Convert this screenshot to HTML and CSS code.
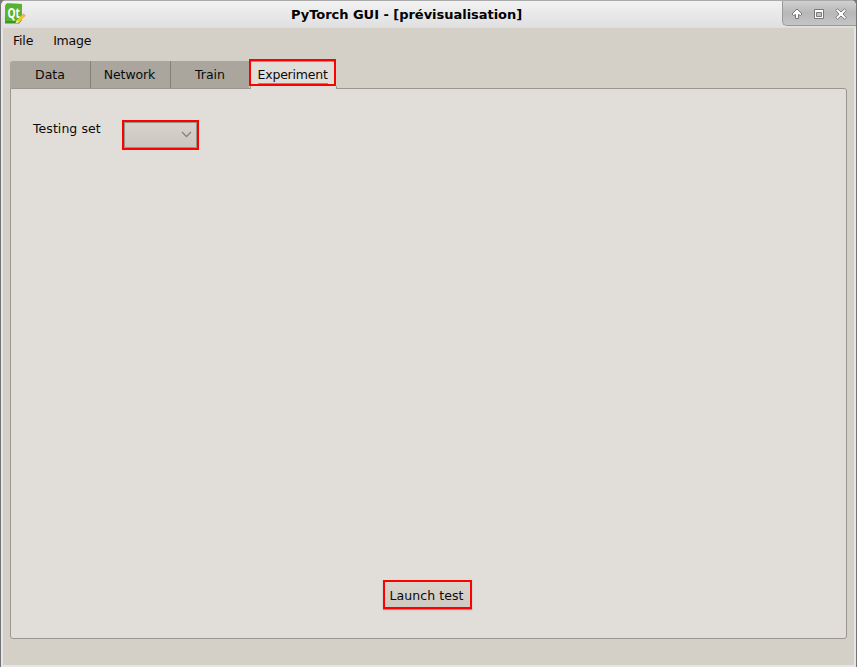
FILE: index.html
```html
<!DOCTYPE html>
<html lang="fr">
<head>
<meta charset="utf-8">
<title>PyTorch GUI</title>
<link rel="stylesheet" href="styles.css">
</head>
<body>
<div class="window">
  <header class="titlebar">
    <svg class="logo" width="22" height="22" viewBox="0 0 22 22">
      <path d="M3 .5 18 1v16L15 20.500H1L1.500 2z" fill="#3a9922"/>
      <path d="M1 3 3 .5 18 1 18 15 16 18 2 18z" fill="#57b32f"/>
      <text x="3.500" y="14.500" class="logo-text" textLength="12.500" lengthAdjust="spacingAndGlyphs">Qt</text>
      <path d="M11.500 20.500 13 17 18.500 11.500 20.800 13.500 15.500 19z" fill="#f4c51d"/>
      <path d="M11.500 20.500 13 17 15.500 19z" fill="#f6e4ba"/>
      <path d="M18 12 19.500 10.500 21.700 12.500 20.300 14z" fill="#e9a09a"/>
    </svg>
    <h1 class="title">PyTorch GUI - [prévisualisation]</h1>
    <div class="controls">
      <svg width="12" height="12" viewBox="0 0 12 12"><path d="M6 1 11 6 9.500 7.500 7.500 6.500V10.500H4.500V6.500L2.500 7.500 1 6z" class="glyph"/></svg>
      <svg width="12" height="12" viewBox="0 0 12 12"><path d="M1.500 1.500h9v9h-9z" class="glyph"/><path d="M3.500 4.500h5v4h-5z" fill="#c2c2c2" stroke="#777"/></svg>
      <svg width="12" height="12" viewBox="0 0 12 12"><path d="M2.500.8 6 4 9.500.8 11.200 2.500 8 6 11.200 9.500 9.500 11.200 6 8 2.500 11.200.8 9.500 4 6 .8 2.500z" class="glyph"/></svg>
    </div>
  </header>
  <main class="client">
    <nav class="menu"><span>File</span><span>Image</span></nav>
    <div class="tabs">
      <div class="tab">Data</div>
      <div class="tab">Network</div>
      <div class="tab">Train</div>
      <div class="tab active"><span>Experiment</span></div>
    </div>
    <section class="panel">
      <div class="field">
        <label>Testing set</label>
        <div class="combo"><svg width="11" height="7" viewBox="0 0 11 7"><path d="M1 1 5.500 5.500 10 1" fill="none" stroke="#85827c" stroke-width="1.300"/></svg></div>
      </div>
      <button class="launch">Launch test</button>
    </section>
  </main>
</div>
</body>
</html>
```
FILE: styles.css
```css
* { box-sizing: border-box; }
body {
  margin: 0;
  background: #777;
  font: 12.5px/16px "DejaVu Sans", sans-serif;
  color: #0a0a0a;
}
.window {
  display: flex;
  flex-direction: column;
  width: 857px;
  height: 667px;
  border: solid #747474;
  border-width: 0 1px;
  border-radius: 6px 6px 0 0;
  background: #e6e6e6;
  overflow: hidden;
}
.titlebar {
  display: flex;
  height: 28px;
  flex: none;
  padding-left: 3px;
  border-top: 1px solid #aaa;
  background: linear-gradient(#f2f2f2, #dfdfdf);
}
.logo { margin-top: 2px; }
.logo-text { font: bold 14px "Open Sans", sans-serif; fill: #fff; }
.title {
  flex: 1;
  margin: 0;
  padding: 6px 0 0 265px;
  font-size: 13px;
  line-height: 16px;
  letter-spacing: -0.03px;
  color: #000;
  white-space: nowrap;
}
.controls {
  display: flex;
  gap: 10px;
  width: 74px;
  height: 25px;
  padding: 7px 0 0 8px;
  border: solid #999;
  border-width: 0 0 1px 1px;
  border-radius: 0 0 0 5px;
  background: linear-gradient(#d0d0d0, #b8b8b8 50%, #c5c5c5);
}
.glyph { fill: #fff; stroke: #777; stroke-width: 1; }
.client {
  display: flex;
  flex-direction: column;
  flex: 1;
  margin: 0 2px 2px;
  padding: 0 7px 26px;
  background: #d4cfc7;
}
.menu {
  display: flex;
  gap: 20px;
  height: 33px;
  padding: 5px 0 0 3px;
  letter-spacing: -0.2px;
}
.tabs { display: flex; height: 27px; }
.tab {
  width: 80px;
  padding-top: 6px;
  border-right: 1px solid #85827c;
  background: #aaa69e;
  text-align: center;
}
.tab:first-child { width: 81px; border-radius: 3px 0 0; }
.tab:nth-child(2) { padding-right: 2px; letter-spacing: -0.1px; }
.tab:nth-child(3) { width: 78px; border-right: 0; }
.active {
  position: relative;
  width: 87px;
  height: 27px;
  margin-top: -2px;
  padding-top: 6px;
  border: 2px solid #f00;
  background: #e1ded9;
  box-shadow: inset 0 1px #9b978f;
  letter-spacing: -0.2px;
}
/* Joins the selected tab to the panel below it */
.active::after {
  content: "";
  position: absolute;
  top: 25px;
  left: -1px;
  width: 85px;
  height: 3px;
  border: solid #9b978f;
  border-width: 0 1px;
  background: #e1ded9;
}
.active span { display: block; width: 70px; height: 17px; margin: 0 auto; border-bottom: 1px solid #5b9cc4; }
.panel {
  display: flex;
  flex-direction: column;
  flex: 1;
  justify-content: space-between;
  padding: 31px 22px 29px;
  border: 1px solid #9b978f;
  border-radius: 0 3px 3px 3px;
  background: #e1ded9;
}
.field { display: flex; }
.field label { width: 89px; padding-top: 1px; letter-spacing: 0.06px; }
.combo {
  display: flex;
  align-items: center;
  justify-content: flex-end;
  width: 77px;
  height: 30px;
  padding: 0 5px 1px 0;
  border: 2px solid #f00;
  background: linear-gradient(#d8d3cb, #cbc6bf);
  box-shadow: inset 0 0 0 1px #96928a;
}
.launch {
  width: 89px;
  height: 29px;
  margin-left: 350px;
  padding: 2px 2px 0 0;
  border: 2px solid #f00;
  background: linear-gradient(#d9d4cc, #cfcac2);
  box-shadow: 0 1px 1px #99958d;
  font: inherit;
  letter-spacing: 0.09px;
  color: inherit;
}
```
